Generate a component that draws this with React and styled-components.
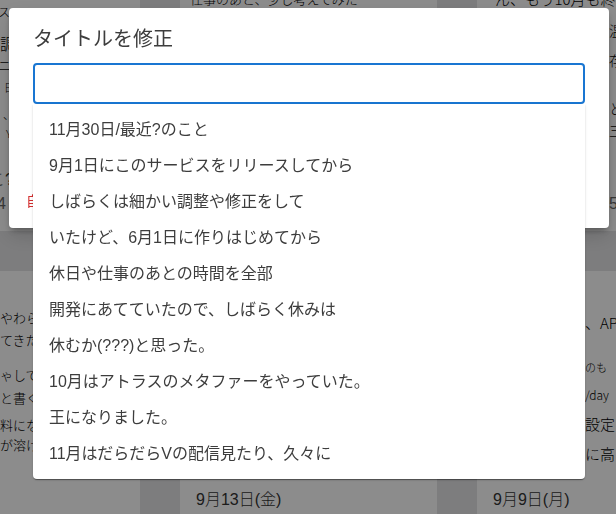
import React from 'react';
import styled, { createGlobalStyle } from 'styled-components';

const FONT = '"Liberation Sans", "Noto Sans CJK JP", sans-serif';
const HAND = '"Noto Sans CJK JP", sans-serif';

const Global = createGlobalStyle`
  html, body {
    margin: 0;
    height: 100%;
    overflow: hidden;
    background: #e3e3e5;
    font-family: ${FONT};
  }
`;

const Board = styled.div`
  display: grid;
  grid-template-columns: repeat(3, 257px);
  grid-template-rows: 231px 243px;
  column-gap: 40px;
  row-gap: 40px;
  margin-left: -117px;
`;

const Card = styled.div`
  background: #fff;
  display: flex;
  flex-direction: column;
  overflow: hidden;
`;

const Scan = styled.div`
  height: ${p => p.$height}px;
  flex: none;
  overflow: hidden;
  background: #fff;
  font-family: ${HAND};
  font-weight: 300;
  color: #000;
`;

const Scribble = styled.div`
  height: ${p => p.$height || 22}px;
  line-height: ${p => p.$height || 22}px;
  margin-top: ${p => p.$top || 0}px;
  padding-left: ${p => p.$indent || 0}px;
  font-size: ${p => p.$size || 13}px;
  white-space: nowrap;
`;

const Foot = styled.div`
  padding: 17px 16px 0;
  color: #333;
`;

const DateLabel = styled.div`
  font-size: 16px;
  line-height: 24px;
  font-weight: 300;
  padding-left: ${p => p.$indent || 0}px;
  white-space: nowrap;
`;

const Count = styled.div`
  font-size: 16px;
  line-height: 24px;
  color: #666;
  padding-left: ${p => p.$indent || 0}px;
`;

const Backdrop = styled.div`
  position: fixed;
  inset: 0;
  background: rgba(0, 0, 0, 0.45);
  padding: 8px 0 0 9px;
`;

const Modal = styled.div`
  position: relative;
  width: 600px;
  height: 220px;
  box-sizing: border-box;
  padding: 17px 24px 16px;
  background: #fff;
  border-radius: 4px;
  box-shadow: 0 4px 6px -2px rgba(0, 0, 0, 0.35), 0 8px 20px rgba(0, 0, 0, 0.14);
`;

const Title = styled.h2`
  margin: 0 0 9px;
  font-size: 20px;
  line-height: 29px;
  font-weight: 400;
  color: #3d3d3d;
`;

const Field = styled.div`
  position: relative;
  width: 552px;
`;

const Input = styled.input`
  display: block;
  width: 100%;
  height: 41px;
  box-sizing: border-box;
  border: 2px solid #1976d2;
  border-radius: 4px;
  outline: none;
  padding: 0 14px;
  font-family: ${FONT};
  font-size: 16px;
`;

const Menu = styled.ul`
  position: absolute;
  z-index: 2;
  top: 41px;
  left: 0;
  right: 0;
  margin: 0;
  padding: 8px 0 7px;
  list-style: none;
  background: #fff;
  border-radius: 0 0 4px 4px;
  box-shadow: 0 2px 1px -1px rgba(0, 0, 0, 0.3), 0 1px 1px rgba(0, 0, 0, 0.16), 0 1px 3px rgba(0, 0, 0, 0.12);
`;

const Option = styled.li`
  height: 36px;
  line-height: 36px;
  padding: 0 16px;
  font-size: 16px;
  color: #3d3d3d;
  white-space: nowrap;
`;

const Action = styled.button`
  position: absolute;
  left: 17px;
  bottom: 15px;
  padding: 0;
  border: 0;
  background: none;
  font-family: ${FONT};
  font-size: 14px;
  line-height: 24px;
  color: #d32f2f;
`;

const suggestions = [
  '11月30日/最近?のこと',
  '9月1日にこのサービスをリリースしてから',
  'しばらくは細かい調整や修正をして',
  'いたけど、6月1日に作りはじめてから',
  '休日や仕事のあとの時間を全部',
  '開発にあてていたので、しばらく休みは',
  '休むか(???)と思った。',
  '10月はアトラスのメタファーをやっていた。',
  '王になりました。',
  '11月はだらだらVの配信見たり、久々に',
];

export default function App() {
  return (
    <>
      <Global />
      <Board>
        <Card>
          <Scan $height={151}>
            <Scribble $indent={115} $top={2} $height={20} $size={12}>ス</Scribble>
            <Scribble $indent={117} $top={10} $size={16}>調</Scribble>
            <Scribble $indent={115}>ニ</Scribble>
            <Scribble $indent={121} $size={11}>日</Scribble>
            <Scribble $indent={120} $top={5} $size={11}>、</Scribble>
            <Scribble $indent={123} $height={16} $size={11}>Y</Scribble>
          </Scan>
          <Foot>
            <DateLabel $indent={90}>こ?</DateLabel>
            <Count $indent={98}>4</Count>
          </Foot>
        </Card>
        <Card>
          <Scan $height={151}>
            <Scribble $indent={10} $top={-9} $height={16}>仕事のあと、少し考えてみた</Scribble>
          </Scan>
          <Foot />
        </Card>
        <Card>
          <Scan $height={151}>
            <Scribble $indent={18} $top={-9} $height={16} $size={15}>ん、もう10月も終わる</Scribble>
            <Scribble $indent={132} $top={12} $size={14}>温</Scribble>
            <Scribble $indent={132} $top={8} $size={14}>存</Scribble>
            <Scribble $indent={132} $top={26} $size={14}>と</Scribble>
            <Scribble $indent={132} $size={14}>三</Scribble>
          </Scan>
          <Foot>
            <DateLabel>&nbsp;</DateLabel>
            <Count $indent={116}>5</Count>
          </Foot>
        </Card>
        <Card>
          <Scan $height={200}>
            <Scribble $indent={117} $top={36} $size={13}>やわらかい</Scribble>
            <Scribble $indent={117} $size={13}>てきた</Scribble>
            <Scribble $indent={117} $top={13} $size={13}>ゃして</Scribble>
            <Scribble $indent={117} $top={1} $size={13}>と書く</Scribble>
            <Scribble $indent={117} $top={5} $size={13}>料になる</Scribble>
            <Scribble $indent={117} $top={-2} $size={13}>が溶ける</Scribble>
          </Scan>
          <Foot />
        </Card>
        <Card>
          <Scan $height={200} />
          <Foot>
            <DateLabel>9月13日(金)</DateLabel>
          </Foot>
        </Card>
        <Card>
          <Scan $height={200}>
            <Scribble $indent={108} $top={41} $size={15}>、API</Scribble>
            <Scribble $indent={108} $top={22} $size={11}>のも</Scribble>
            <Scribble $indent={108} $top={6} $size={12}>/day</Scribble>
            <Scribble $indent={108} $top={7} $size={15}>設定</Scribble>
            <Scribble $indent={108} $top={8} $size={15}>に高い</Scribble>
          </Scan>
          <Foot>
            <DateLabel>9月9日(月)</DateLabel>
          </Foot>
        </Card>
      </Board>
      <Backdrop>
        <Modal>
          <Title>タイトルを修正</Title>
          <Field>
            <Input aria-label="タイトル" />
            <Menu>
              {suggestions.map(text => (
                <Option key={text}>{text}</Option>
              ))}
            </Menu>
          </Field>
          <Action>自動</Action>
        </Modal>
      </Backdrop>
    </>
  );
}
